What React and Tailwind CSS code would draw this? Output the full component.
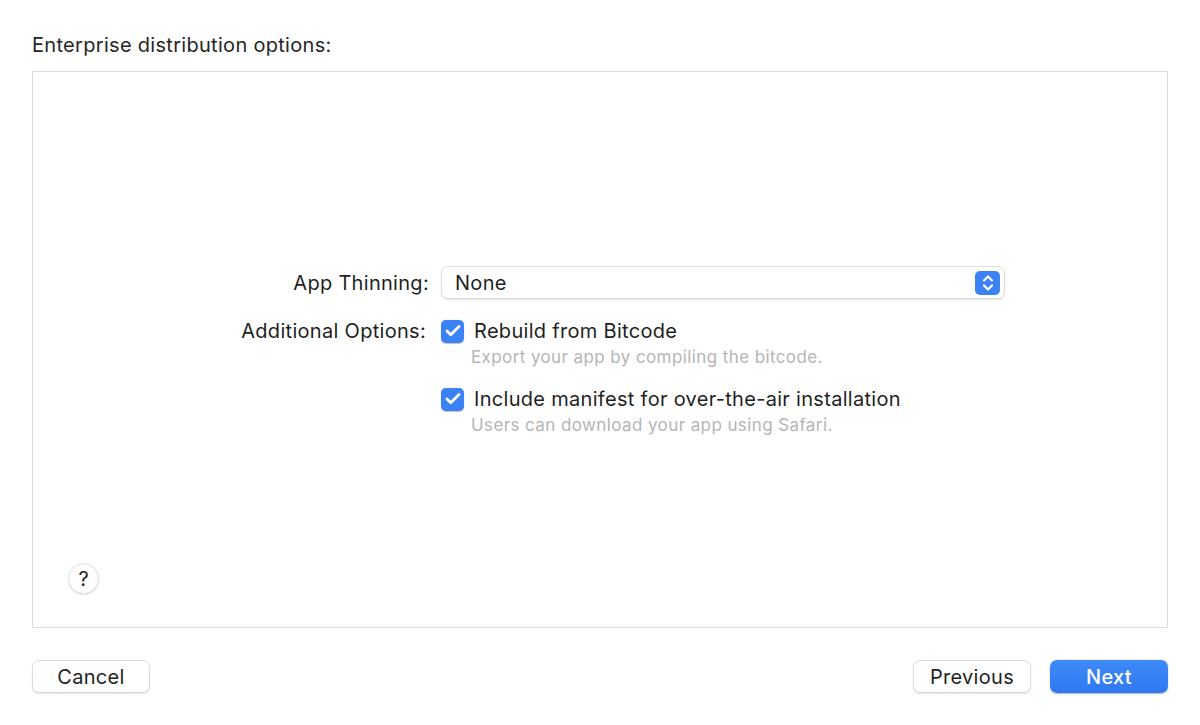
import { Check } from "lucide-react";

const font = { fontFamily: "Inter, 'Noto Sans', sans-serif" };

function Checkbox() {
  return (
    <span className="flex h-[23px] w-[23px] shrink-0 items-center justify-center rounded-[5px] bg-[#3b82f6] shadow-[0_0.5px_1px_rgba(0,0,0,0.25)]">
      <Check className="h-[18px] w-[18px] text-white" strokeWidth={3.75} />
    </span>
  );
}

function Option({ label, hint }) {
  return (
    <div className="flex flex-col">
      <div className="flex items-center gap-[10px]">
        <Checkbox />
        <span className="text-[20px] leading-[24px] tracking-[0.3px] text-[#1f1f1f]">{label}</span>
      </div>
      <span className="ml-[30px] mt-[4px] text-[17px] leading-[20px] tracking-[0.4px] text-[#b5b5b5]">{hint}</span>
    </div>
  );
}

function Button({ children, primary, className = "" }) {
  return (
    <button
      className={
        "h-[33px] w-[118px] rounded-[7px] text-[20px] leading-none tracking-[0.3px] " +
        (primary
          ? "bg-gradient-to-b from-[#3f8af8] to-[#2f78f2] font-medium text-white shadow-[0_0.5px_1.5px_rgba(0,0,0,0.3)] "
          : "border border-[#dcdcdc] bg-white text-[#1f1f1f] shadow-[0_1px_1.5px_rgba(0,0,0,0.12)] ") +
        className
      }
    >
      {children}
    </button>
  );
}

export default function App() {
  return (
    <div className="flex h-[725px] w-[1200px] flex-col bg-white px-[32px]" style={font}>
      <h1 className="mt-[33px] text-[20px] leading-[24px] tracking-[0.3px] text-[#262626]">Enterprise distribution options:</h1>

      <div className="mt-[14px] flex h-[557px] flex-col border border-[#dedede] bg-white">
        <div className="mt-[194px] flex flex-col">
          <div className="flex items-center">
            <span className="w-[397px] pr-[1px] text-right text-[20px] leading-[24px] tracking-[0.3px] text-[#1f1f1f]">App Thinning:</span>
            <div className="ml-[11px] flex h-[33px] w-[564px] items-center justify-between rounded-[7px] border border-[#dcdcdc] bg-white pl-[13px] pr-[4px] shadow-[0_1px_1.5px_rgba(0,0,0,0.1)]">
              <span className="text-[20px] leading-[24px] tracking-[0.3px] text-[#1f1f1f]">None</span>
              <span className="flex h-[24px] w-[25px] items-center justify-center rounded-[5px] bg-[#3b82f6]">
                <svg width="12" height="18" viewBox="0 0 12 18" fill="none" stroke="white" strokeWidth="2.2" strokeLinecap="round" strokeLinejoin="round">
                  <path d="M2 6.5 L6 2.5 L10 6.5" />
                  <path d="M2 11.5 L6 15.5 L10 11.5" />
                </svg>
              </span>
            </div>
          </div>

          <div className="mt-[20px] flex items-start">
            <span className="w-[397px] pr-[4px] text-right text-[20px] leading-[24px] tracking-[0.3px] text-[#1f1f1f]">Additional Options:</span>
            <div className="ml-[11px] flex flex-col gap-[20px]">
              <Option label="Rebuild from Bitcode" hint="Export your app by compiling the bitcode." />
              <Option label="Include manifest for over-the-air installation" hint="Users can download your app using Safari." />
            </div>
          </div>
        </div>

        <div className="flex-1" />

        <button className="mb-[33px] ml-[35px] flex h-[31px] w-[31px] items-center justify-center rounded-full border border-[#e2e2e2] bg-white text-[20px] text-[#1f1f1f] shadow-[0_1px_1.5px_rgba(0,0,0,0.12)]">
          ?
        </button>
      </div>

      <div className="mt-[32px] flex items-center">
        <Button>Cancel</Button>
        <div className="flex-1" />
        <Button>Previous</Button>
        <Button primary className="ml-[19px]">Next</Button>
      </div>
    </div>
  );
}
